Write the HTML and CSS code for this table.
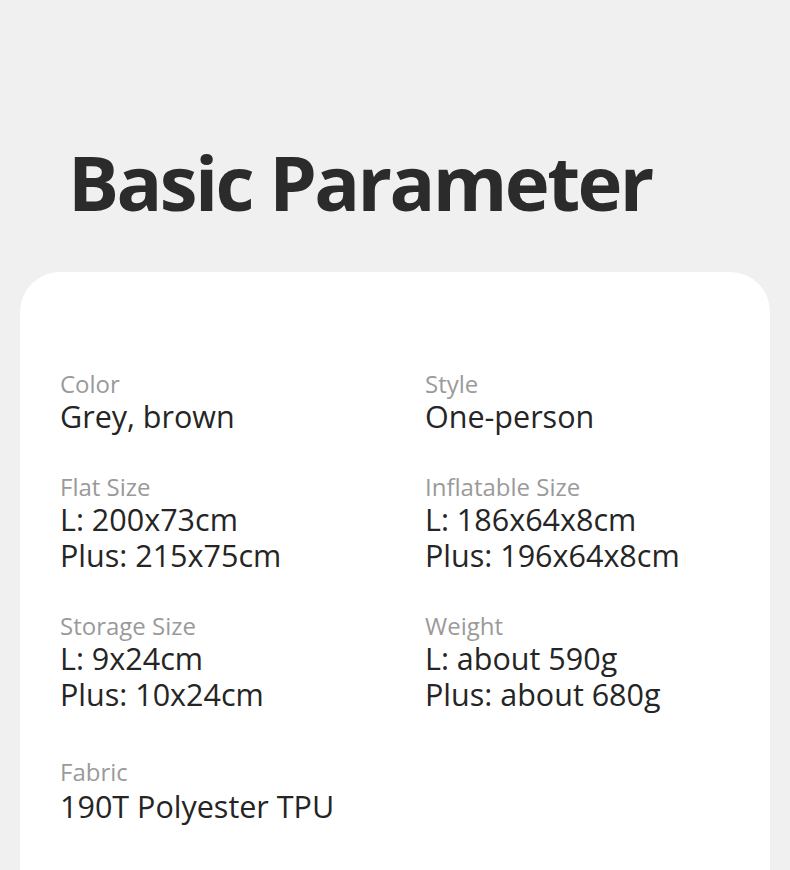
FILE: index.html
```html
<!DOCTYPE html>
<html lang="en">
<head>
<meta charset="utf-8">
<link rel="stylesheet" href="styles.css">
</head>
<body>
<main class="page">
  <h1 class="title">Basic Parameter</h1>
  <section class="card">
    <div class="grid">
      <div class="item">
        <div class="label">Color</div>
        <div class="value">Grey, brown</div>
      </div>
      <div class="item">
        <div class="label">Style</div>
        <div class="value">One-person</div>
      </div>
      <div class="item">
        <div class="label">Flat Size</div>
        <div class="value">L: 200x73cm</div>
        <div class="value">Plus: 215x75cm</div>
      </div>
      <div class="item">
        <div class="label">Inflatable Size</div>
        <div class="value">L: 186x64x8cm</div>
        <div class="value">Plus: 196x64x8cm</div>
      </div>
      <div class="item">
        <div class="label">Storage Size</div>
        <div class="value">L: 9x24cm</div>
        <div class="value">Plus: 10x24cm</div>
      </div>
      <div class="item">
        <div class="label">Weight</div>
        <div class="value">L: about 590g</div>
        <div class="value">Plus: about 680g</div>
      </div>
      <div class="item item-last">
        <div class="label">Fabric</div>
        <div class="value">190T Polyester TPU</div>
      </div>
    </div>
  </section>
</main>
</body>
</html>
```
FILE: styles.css
```css
html, body {
  margin: 0;
  padding: 0;
}
body {
  background: #f0f0f0;
  font-family: "Open Sans", "Noto Sans", sans-serif;
  color: #2a2a2a;
  overflow: hidden;
  height: 870px;
}
.page {
  display: flex;
  flex-direction: column;
}
.title {
  margin: 0;
  padding: 132px 0 0 68px;
  height: 140px;
  box-sizing: border-box;
  font-size: 76px;
  line-height: 100px;
  font-weight: 700;
  color: #2b2b2b;
  letter-spacing: -2.6px;
}
.card {
  margin: 132px 20px 0;
  background: #ffffff;
  border-radius: 40px 40px 0 0;
  padding: 98px 40px 40px;
  min-height: 600px;
}
.grid {
  display: grid;
  grid-template-columns: 365px 1fr;
  row-gap: 39px;
}
.item-last {
  margin-top: 7px;
}
.item-last .value {
  margin-top: 2px;
}
.label {
  font-size: 24px;
  line-height: 28px;
  color: #9a9a9a;
}
.value {
  font-size: 30.5px;
  line-height: 36px;
  color: #252525;
}
```
